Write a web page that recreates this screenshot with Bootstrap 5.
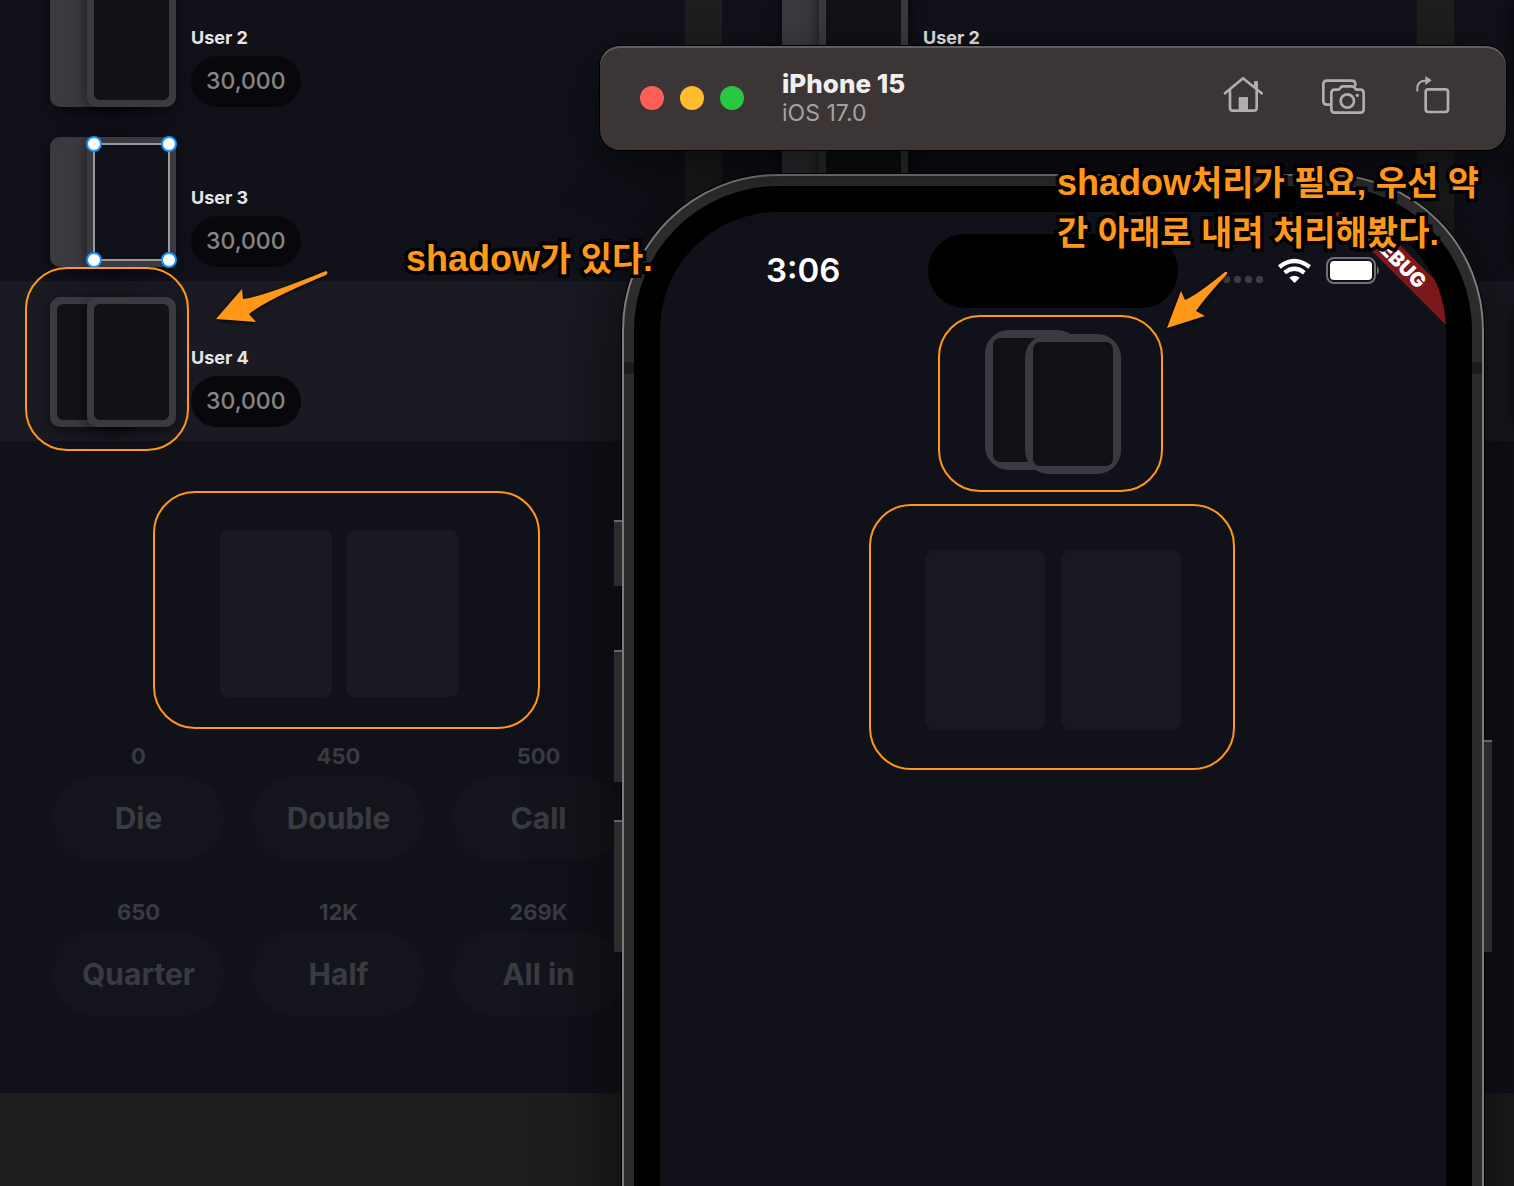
<!DOCTYPE html>
<html lang="ko">
<head>
<meta charset="utf-8">
<meta name="viewport" content="width=device-width, initial-scale=1">
<title>Card table review</title>
<link rel="stylesheet" href="https://cdn.jsdelivr.net/npm/bootstrap@5.3.0/dist/css/bootstrap.min.css">
<style>
  :root { --ink:#11111a; --edge:#3a3a40; --slot:#191922; --mark:#ff9818; }
  body { background:#1e1e1e; font-family:Inter,"Noto Sans CJK KR",sans-serif; }
  button { font-family:inherit; }

  .desk { min-height:100vh; }
  .boards { gap:37px; margin:-39px 0 0 -10px; }
  .board { width:695px; background:var(--ink); padding-bottom:77px; overflow:hidden; }

  .player { height:160px; padding:16px 60px 14px; gap:15px; }
  .player-active { background:#1a1a23; }
  .player-name { font-size:18px; font-weight:700; line-height:36px; color:#e6e6e8; }
  .player-chips { font-size:23px; font-weight:500; line-height:51px; padding:0 15px; border-radius:26px; background:#08080c; color:#868689; }

  .hole { width:89px; height:130px; border:7px solid var(--edge); border-radius:10px; background:var(--edge); box-shadow:0 4px 16px rgba(0,0,0,.6); }
  .hole::before { content:""; display:block; height:100%; border-radius:6px; background:#111216; }
  .hole + .hole { margin-left:-52px; }
  .hole-solid::before { background:var(--edge); }
  .hole-picked::before { border-radius:0; background:var(--ink); outline:2px solid #999; outline-offset:-1px; }
  .grip { width:16px; height:16px; border-radius:50%; background:#fff; border:2px solid #1590ff; }

  .slots { gap:14px; margin-top:89px; padding-left:2px; }
  .slot { width:112px; height:167px; border-radius:8px; background:var(--slot); }

  .bets { display:grid; grid-template-columns:repeat(3,171px); justify-content:center; gap:32px 29px; margin-top:39px; padding-left:2px; }
  .bet-sum { font-size:22px; font-weight:700; line-height:40px; color:#3a3b41; }
  .bet-go { height:84px; border:0; border-radius:42px; background:#14151c; color:#3a3b41; font-size:30px; font-weight:700; }

  .phone { left:622px; top:174px; width:862px; bottom:-180px; border:2px solid #7c7c7c; border-radius:156px; background:#2c2c2c; padding:10px; box-shadow:0 10px 80px 4px rgba(0,0,0,.65), 0 0 0 1px #050507; }
  .bezel { background:#000; border-radius:144px; padding:26px; }
  .screen { background:var(--ink); border-radius:118px; overflow:hidden; }
  .side-key { width:8px; margin:0 2px; background:#2c2c2c; border-top:2px solid #666; }
  .antenna { width:10px; height:12px; top:186px; background:#1c1c1c; }

  .status { height:74px; margin-top:22px; }
  .clock { width:268px; padding-left:106px; font-size:33px; font-weight:600; color:#fff; }
  .island { width:250px; height:74px; border-radius:37px; background:#000; }
  .signals { gap:15px; padding:0 0 2px 45px; }
  .dots { gap:4px; padding-bottom:1px; }
  .dots span { width:7px; height:7px; border-radius:3px; background:#3d3d46; }
  .ribbon { width:160px; height:24px; top:36px; right:-32px; transform:rotate(45deg); background:#7c171a; color:#fff; font-size:20px; font-weight:900; line-height:24px; }

  .pair { margin-top:22px; }
  .sim-hole { width:96px; height:140px; border:8px solid var(--edge); border-radius:24px; background:var(--edge); }
  .sim-hole::before { content:""; display:block; height:100%; border-radius:7px; background:#101116; }
  .sim-hole + .sim-hole { margin:4px 0 0 -56px; }
  .sim-slots { gap:16px; margin-top:76px; }
  .sim-slot { width:120px; height:180px; border-radius:10px; background:#181821; }

  .titlebar { left:600px; right:8px; top:46px; height:104px; padding:0 56px 0 40px; border-radius:20px; background:#3b3536; box-shadow:inset 0 2px 0 #625e5e, 0 0 0 1px #000, 0 16px 50px rgba(0,0,0,.6); }
  .lights { gap:16px; margin-right:38px; }
  .light { width:24px; height:24px; border:0; border-radius:50%; padding:0; }
  .sim-name { font-size:26px; font-weight:800; line-height:30px; color:#f0efef; }
  .sim-os { font-size:23px; line-height:28px; color:#a5a1a1; }
  .tools { gap:50px; }
  .tools button { border:0; padding:0; background:none; color:#b1adad; line-height:0; }

  .ring { border:2px solid var(--mark); border-radius:42px; }
  .ring-a { left:25px; top:267px; width:164px; height:184px; }
  .ring-b { left:153px; top:491px; width:387px; height:238px; }
  .ring-c { left:938px; top:315px; width:225px; height:177px; }
  .ring-d { left:869px; top:504px; width:366px; height:266px; }
  .note { font-family:"Liberation Sans","Noto Sans CJK KR",sans-serif; font-size:34px; font-weight:700; line-height:50px; color:var(--mark); -webkit-text-stroke:7px #000; paint-order:stroke fill; }
  .note-latin { font-size:36px; line-height:1; }
  .note-a { left:406px; top:234px; }
  .note-b { left:1057px; top:158px; }
  .arrow { overflow:visible; filter:drop-shadow(0 1px 2px #000); }
  .arrow-a { left:216px; top:270px; }
  .arrow-b { left:1167px; top:271px; }
</style>
<script src="https://cdn.jsdelivr.net/npm/bootstrap@5.3.0/dist/js/bootstrap.bundle.min.js"></script>
</head>
<body>
<main class="desk position-relative overflow-hidden">

  <div class="boards d-flex">
    <section class="board flex-shrink-0">
      <div class="player d-flex">
        <div class="d-flex"><div class="hole hole-solid"></div><div class="hole"></div></div>
        <div class="d-flex flex-column justify-content-end align-items-start"><div class="player-name">User 2</div><div class="player-chips">30,000</div></div>
      </div>
      <div class="player d-flex">
        <div class="d-flex"><div class="hole hole-solid"></div>
          <div class="hole hole-picked position-relative">
            <span class="grip position-absolute top-0 start-0 translate-middle"></span>
            <span class="grip position-absolute top-0 start-100 translate-middle"></span>
            <span class="grip position-absolute top-100 start-0 translate-middle"></span>
            <span class="grip position-absolute top-100 start-100 translate-middle"></span>
          </div></div>
        <div class="d-flex flex-column justify-content-end align-items-start"><div class="player-name">User 3</div><div class="player-chips">30,000</div></div>
      </div>
      <div class="player player-active d-flex">
        <div class="d-flex"><div class="hole"></div><div class="hole"></div></div>
        <div class="d-flex flex-column justify-content-end align-items-start"><div class="player-name">User 4</div><div class="player-chips">30,000</div></div>
      </div>
      <div class="slots d-flex justify-content-center"><div class="slot"></div><div class="slot"></div></div>
      <div class="bets text-center">
        <div class="d-flex flex-column"><span class="bet-sum">0</span><button class="bet-go" type="button">Die</button></div>
        <div class="d-flex flex-column"><span class="bet-sum">450</span><button class="bet-go" type="button">Double</button></div>
        <div class="d-flex flex-column"><span class="bet-sum">500</span><button class="bet-go" type="button">Call</button></div>
        <div class="d-flex flex-column"><span class="bet-sum">650</span><button class="bet-go" type="button">Quarter</button></div>
        <div class="d-flex flex-column"><span class="bet-sum">12K</span><button class="bet-go" type="button">Half</button></div>
        <div class="d-flex flex-column"><span class="bet-sum">269K</span><button class="bet-go" type="button">All in</button></div>
      </div>
    </section>

    <section class="board flex-shrink-0">
      <div class="player d-flex">
        <div class="d-flex"><div class="hole hole-solid"></div><div class="hole"></div></div>
        <div class="d-flex flex-column justify-content-end align-items-start"><div class="player-name">User 2</div><div class="player-chips" aria-hidden="true">&nbsp;</div></div>
      </div>
      <div class="player d-flex"><div class="d-flex"><div class="hole hole-solid"></div><div class="hole"></div></div></div>
      <div class="player player-active d-flex"><div class="d-flex"><div class="hole"></div><div class="hole"></div></div></div>
    </section>

    <section class="board flex-shrink-0">
      <div class="player d-flex"><div class="d-flex"><div class="hole"></div></div></div>
      <div class="player d-flex"><div class="d-flex"><div class="hole"></div></div></div>
      <div class="player player-active d-flex"><div class="d-flex"><div class="hole"></div></div></div>
    </section>
  </div>

  <section class="phone position-absolute d-flex" aria-label="iPhone 15">
    <i class="side-key position-absolute end-100" style="top:344px;height:66px"></i>
    <i class="side-key position-absolute end-100" style="top:474px;height:132px"></i>
    <i class="side-key position-absolute end-100" style="top:644px;height:132px"></i>
    <i class="side-key position-absolute start-100" style="top:564px;height:212px"></i>
    <i class="antenna position-absolute start-0"></i>
    <i class="antenna position-absolute end-0"></i>
    <div class="bezel flex-fill d-flex">
      <div class="screen flex-fill position-relative">
        <div class="ribbon position-absolute text-center">DEBUG</div>
        <div class="status d-flex align-items-center">
          <div class="clock">3:06</div>
          <div class="island"></div>
          <div class="signals d-flex align-items-end">
            <div class="dots d-flex"><span></span><span></span><span></span><span></span></div>
            <svg width="33" height="26" viewBox="0 0 99 76" fill="none" stroke="#fff" stroke-width="13" aria-hidden="true">
              <path d="M4 26Q49-10 95 26M20 43Q49 20 79 43"/><path d="M34 58Q49 47 65 58L50 74Z" fill="#fff" stroke="none"/>
            </svg>
            <svg width="55" height="27" viewBox="0 0 55 27" aria-hidden="true">
              <rect x="1" y="1" width="48" height="25" rx="7" fill="none" stroke="#6f6f76" stroke-width="2"/>
              <rect x="4" y="4" width="42" height="19" rx="4" fill="#fff"/><path d="M51 9q4 4 0 9z" fill="#6f6f76"/>
            </svg>
          </div>
        </div>
        <div class="pair d-flex justify-content-center"><div class="sim-hole"></div><div class="sim-hole"></div></div>
        <div class="sim-slots d-flex justify-content-center"><div class="sim-slot"></div><div class="sim-slot"></div></div>
      </div>
    </div>
  </section>

  <header class="titlebar position-absolute d-flex align-items-center">
    <div class="lights d-flex">
      <button class="light" type="button" aria-label="Close" style="background:#ff5f57"></button>
      <button class="light" type="button" aria-label="Minimize" style="background:#febc2e"></button>
      <button class="light" type="button" aria-label="Zoom" style="background:#28c840"></button>
    </div>
    <div><div class="sim-name">iPhone 15</div><div class="sim-os">iOS 17.0</div></div>
    <div class="tools d-flex ms-auto align-items-center pb-1">
      <button class="me-2" type="button" aria-label="Home">
        <svg width="40" height="40" viewBox="70 51 120 120" fill="none" stroke="currentColor" stroke-width="8" stroke-linecap="round" stroke-linejoin="round">
          <path d="M76 103L130 58L186 103M91 95V147Q91 155 99 155H163Q171 155 171 147V95"/>
          <path d="M163 84V69Q163 66 166 66H172Q175 66 175 69V94ZM117 155V117Q117 114 120 114H142Q145 114 145 117V155Z" fill="currentColor" stroke="none"/>
        </svg>
      </button>
      <button type="button" aria-label="Screenshot">
        <svg width="45" height="37" viewBox="363 54 135 111" fill="none" stroke="currentColor" stroke-width="8" stroke-linejoin="round" stroke-linecap="round">
          <path d="M388 134H381Q370 134 370 123V73Q370 62 381 62H455Q466 62 466 73V76"/>
          <path d="M404 158Q394 158 394 148V99Q394 89 404 89H413Q417 89 420 85L423 81Q425 79 430 79H455Q460 79 462 81L465 85Q468 89 472 89H481Q491 89 491 99V148Q491 158 481 158Z"/>
          <circle cx="442" cy="123" r="20"/><circle cx="472" cy="106" r="5" fill="currentColor" stroke="none"/>
        </svg>
      </button>
      <button type="button" aria-label="Rotate">
        <svg width="34" height="42" viewBox="647 42 102 126" fill="none" stroke="currentColor" stroke-width="8" stroke-linecap="round">
          <rect x="676" y="85" width="67" height="68" rx="8"/>
          <path d="M651 89V82Q651 59 675 59" stroke-width="6"/><path d="M675 45L694 58L675 72Z" fill="currentColor" stroke="none"/>
        </svg>
      </button>
    </div>
  </header>

  <div class="ring ring-a position-absolute"></div>
  <div class="ring ring-b position-absolute"></div>
  <div class="ring ring-c position-absolute"></div>
  <div class="ring ring-d position-absolute"></div>
  <div class="note note-a position-absolute text-nowrap"><span class="note-latin position-relative">shadow</span>가 있다.</div>
  <div class="note note-b position-absolute text-nowrap"><span class="note-latin position-relative">shadow</span>처리가 필요, 우선 약<br>간 아래로 내려 처리해봤다.</div>
  <svg class="arrow arrow-a position-absolute" width="112" height="54" viewBox="216 270 112 54" fill="#ff9818" aria-hidden="true">
    <path d="M216 319L242 289L243 299Q262 297 326 271Q329 272 326 275Q266 300 249 314L256 322Z"/>
  </svg>
  <svg class="arrow arrow-b position-absolute" width="61" height="58" viewBox="1167 271 61 58" fill="#ff9818" aria-hidden="true">
    <path d="M1167 328L1181 291L1185 300Q1197 295 1225 272Q1228 271 1227 274Q1205 298 1196 311L1205 316Z"/>
  </svg>
</main>
</body>
</html>
